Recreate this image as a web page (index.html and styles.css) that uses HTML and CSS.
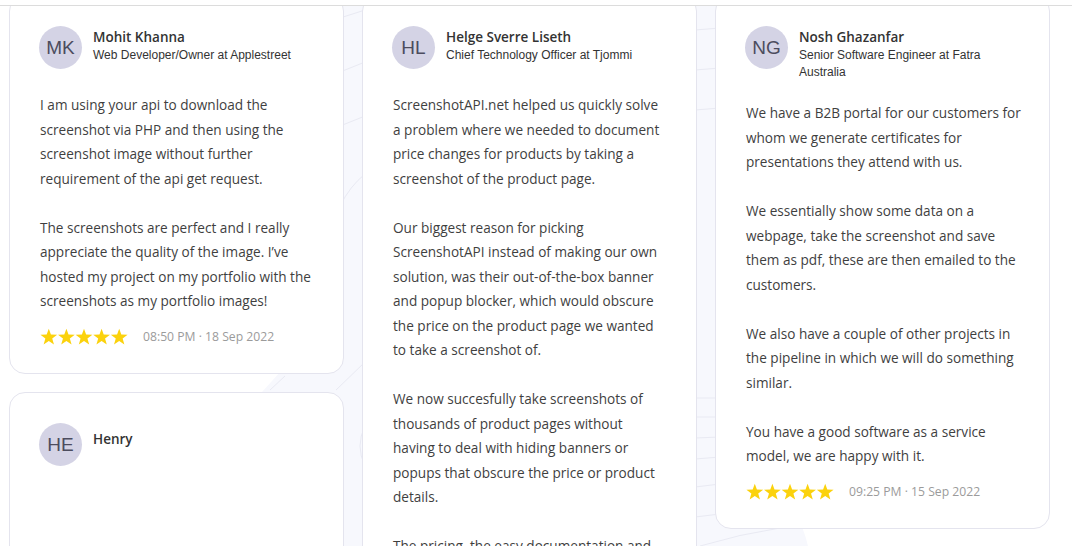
FILE: index.html
```html
<!DOCTYPE html>
<html lang="en">
<head>
    <meta charset="UTF-8">
    <meta name="viewport" content="width=device-width, initial-scale=1.0">
    <title>Testimonials</title>
    <link rel="stylesheet" href="styles.css">
</head>
<body>
    <section class="wall">
        <!-- soft backdrop shape behind the cards -->
        <svg class="backdrop" width="1072" height="540" viewBox="0 0 1072 540" aria-hidden="true">
            <path d="M262 386 L300 344 L300 0 L770 0 L770 470 Q 800 505 808 540 L262 540 Z" fill="#f7f8fd"/>
            <g fill="none" stroke="#e9eaf3" stroke-width="1">
                <path d="M340 12 L365 4"/>
                <path d="M340 66 L365 56"/>
                <path d="M340 120 L365 110"/>
                <path d="M340 200 Q 350 180 365 168"/>
                <path d="M270 384 L285 370"/>
                <path d="M336 384 L365 356"/>
                <path d="M365 420 Q 355 440 365 460"/>
                <path d="M695 24 L720 22"/>
                <path d="M695 64 L720 62"/>
                <path d="M695 104 L720 102"/>
                <path d="M695 392 L720 392"/>
                <path d="M695 411 L720 411"/>
                <path d="M695 432 L720 431"/>
                <path d="M695 453 L720 451"/>
                <path d="M695 481 L720 478"/>
                <path d="M695 511 L720 508"/>
                <path d="M700 540 Q 740 528 780 522"/>
            </g>
        </svg>

        <div class="columns">
            <div class="column">
                <article class="card">
                    <div class="card-head">
                        <div class="avatar">MK</div>
                        <div class="who">
                            <h3 class="name">Mohit Khanna</h3>
                            <p class="role">Web Developer/Owner at Applestreet</p>
                        </div>
                    </div>
                    <div class="quote">
                        <p>I am using your api to download the screenshot via PHP and then using the screenshot image without further requirement of the api get request.</p>
                        <p>The screenshots are perfect and I really appreciate the quality of the image. I’ve hosted my project on my portfolio with the screenshots as my portfolio images!</p>
                    </div>
                    <div class="card-foot">
                        <svg class="stars" width="88" height="18" viewBox="0 0 100 20" aria-label="5 stars">
                            <defs>
                                <polygon id="star" points="10,0.5 12.41,7.18 19.51,7.41 13.9,11.77 15.88,18.59 10,14.6 4.12,18.59 6.1,11.77 0.49,7.41 7.59,7.18"/>
                            </defs>
                            <use href="#star" x="0"/>
                            <use href="#star" x="20"/>
                            <use href="#star" x="40"/>
                            <use href="#star" x="60"/>
                            <use href="#star" x="80"/>
                        </svg>
                        <span class="time">08:50 PM · 18 Sep 2022</span>
                    </div>
                </article>

                <article class="card card-tall">
                    <div class="card-head card-head-single">
                        <div class="avatar">HE</div>
                        <div class="who">
                            <h3 class="name">Henry</h3>
                        </div>
                    </div>
                </article>
            </div>

            <div class="column">
                <article class="card card-narrow">
                    <div class="card-head">
                        <div class="avatar">HL</div>
                        <div class="who">
                            <h3 class="name">Helge Sverre Liseth</h3>
                            <p class="role">Chief Technology Officer at Tjommi</p>
                        </div>
                    </div>
                    <div class="quote">
                        <p>ScreenshotAPI.net helped us quickly solve a problem where we needed to document price changes for products by taking a screenshot of the product page.</p>
                        <p>Our biggest reason for picking ScreenshotAPI instead of making our own solution, was their out-of-the-box banner and popup blocker, which would obscure the price on the product page we wanted to take a screenshot of.</p>
                        <p>We now succesfully take screenshots of thousands of product pages without having to deal with hiding banners or popups that obscure the price or product details.</p>
                        <p>The pricing, the easy documentation and the quick support made it an easy choice for us.</p>
                    </div>
                </article>
            </div>

            <div class="column">
                <article class="card">
                    <div class="card-head">
                        <div class="avatar">NG</div>
                        <div class="who">
                            <h3 class="name">Nosh Ghazanfar</h3>
                            <p class="role">Senior Software Engineer at Fatra Australia</p>
                        </div>
                    </div>
                    <div class="quote">
                        <p>We have a B2B portal for our customers for whom we generate certificates for presentations they attend with us.</p>
                        <p>We essentially show some data on a webpage, take the screenshot and save them as pdf, these are then emailed to the customers.</p>
                        <p>We also have a couple of other projects in the pipeline in which we will do something similar.</p>
                        <p>You have a good software as a service model, we are happy with it.</p>
                    </div>
                    <div class="card-foot">
                        <svg class="stars" width="88" height="18" viewBox="0 0 100 20" aria-label="5 stars">
                            <use href="#star" x="0"/>
                            <use href="#star" x="20"/>
                            <use href="#star" x="40"/>
                            <use href="#star" x="60"/>
                            <use href="#star" x="80"/>
                        </svg>
                        <span class="time">09:25 PM · 15 Sep 2022</span>
                    </div>
                </article>
            </div>
        </div>
    </section>
</body>
</html>
```

FILE: styles.css
```css
body {
    margin: 0;
    padding: 0;
    background-color: #fff;
    font-family: "Open Sans", Arial, sans-serif;
    color: #3f3f3f;
}
.wall {
    position: relative;
    margin-top: 5px;
    height: 540px;
    border-top: 1px solid #dcdcdc;
    overflow: hidden;
}
.backdrop {
    position: absolute;
    top: 0;
    left: 0;
}
.columns {
    position: relative;
    display: grid;
    grid-template-columns: repeat(3, 335px);
    gap: 18px;
    padding-left: 9px;
    margin-top: -11px;
    align-items: start;
}
.column {
    display: flex;
    flex-direction: column;
    gap: 18px;
}
.card {
    background-color: #fff;
    border: 1px solid #e4e4ee;
    border-radius: 16px;
    padding: 30px 27.5px 26px 30px;
}
.card-narrow {
    padding-right: 30px;
}
.card-tall {
    min-height: 300px;
}
.card-head {
    display: flex;
    align-items: flex-start;
    gap: 11px;
    margin-bottom: 24px;
}
.card-head-single {
    align-items: center;
}
.avatar {
    flex: 0 0 43px;
    width: 43px;
    height: 43px;
    margin-left: -1px;
    border-radius: 50%;
    background-color: #d4d3e5;
    color: #4c4c5e;
    font-family: "Liberation Sans", Arial, sans-serif;
    font-size: 19px;
    line-height: 43px;
    text-align: center;
}
.who {
    padding-top: 2px;
    margin-bottom: -4px;
}
.card-head-single .who {
    padding-top: 0;
    margin-bottom: 0;
    margin-top: -10px;
}
.name {
    margin: 0;
    font-size: 13.5px;
    font-weight: 600;
    line-height: 18px;
    color: #333;
}
.role {
    margin: 1px 0 0;
    font-family: "Liberation Sans", Arial, sans-serif;
    font-size: 12px;
    line-height: 17px;
    color: #333;
}
.quote p {
    margin: 0 0 24.5px;
    font-size: 13.6px;
    line-height: 24.5px;
}
.quote p:last-child {
    margin-bottom: 0;
}
.card-foot {
    display: flex;
    align-items: center;
    gap: 15px;
    margin-top: 13px;
    height: 20px;
}
.stars {
    fill: #fbd20d;
}
.time {
    font-size: 12.2px;
    color: #9b9b9b;
}
```
